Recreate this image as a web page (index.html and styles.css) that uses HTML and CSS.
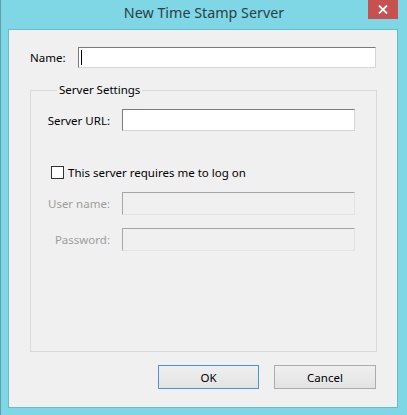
FILE: index.html
```html
<!DOCTYPE html>
<html>
<head>
<meta charset="utf-8">
<link rel="stylesheet" href="styles.css">
</head>
<body>
<div class="frame">
  <div class="titlebar">
    <div class="title">New Time Stamp Server</div>
    <div class="close"><svg width="10" height="9" viewBox="0 0 10 9"><path d="M1 0.5 L9 8.5 M9 0.5 L1 8.5" stroke="#fff" stroke-width="1.8"/></svg></div>
  </div>
  <div class="client">
    <div class="name-row">
      <label class="name-label">Name:</label>
      <div class="field active"><span class="caret"></span></div>
    </div>
    <fieldset class="group">
      <legend>Server Settings</legend>
      <div class="row url-row">
        <label class="lbl">Server URL:</label>
        <div class="field"></div>
      </div>
      <div class="check-row">
        <span class="checkbox"></span>
        <span class="check-text">This server requires me to log on</span>
      </div>
      <div class="row user-row">
        <label class="lbl disabled">User name:</label>
        <div class="field off"></div>
      </div>
      <div class="row pass-row">
        <label class="lbl disabled">Password:</label>
        <div class="field off"></div>
      </div>
    </fieldset>
    <div class="buttons">
      <div class="btn default">OK</div>
      <div class="btn">Cancel</div>
    </div>
  </div>
</div>
</body>
</html>
```

FILE: styles.css
```css
* { box-sizing: border-box; }
html, body { margin: 0; padding: 0; }
body {
  width: 407px;
  height: 415px;
  overflow: hidden;
  background: #7fd7e6;
  font-family: "Noto Sans", "Open Sans", sans-serif;
  font-size: 11.5px;
  color: #000;
}
.frame {
  width: 407px;
  height: 415px;
  display: flex;
  flex-direction: column;
  padding: 0 9px 7px 7px;
  border-left: 1px solid #5f9fb0;
}
.titlebar {
  height: 29px;
  display: flex;
  align-items: flex-start;
  justify-content: center;
  position: relative;
}
.title {
  font-size: 14.3px;
  line-height: 25px;
  color: #2b4049;
  margin-left: 2px;
}
.close {
  position: absolute;
  right: 0;
  top: 0;
  width: 30px;
  height: 19px;
  background: #c75050;
  display: flex;
  align-items: center;
  justify-content: center;
}
.client {
  flex: 1;
  background: #f0f0f0;
  border: 1px solid #64bccc;
  padding: 17px 21px 0 21px;
  display: flex;
  flex-direction: column;
}
.name-row {
  display: flex;
  align-items: center;
  height: 21px;
}
.name-label { width: 48px; }
.field {
  flex: 1;
  height: 100%;
  background: #fff;
  border: 1px solid;
  border-color: #7a7a7a #d6d6d6 #d6d6d6 #7a7a7a;
  position: relative;
}
.field.off {
  background: #f0f0f0;
  border-color: #a6a6a6 #e3e3e3 #e3e3e3 #a6a6a6;
}
.caret {
  position: absolute;
  left: 2px;
  top: 2px;
  width: 1px;
  height: 15px;
  background: #000;
}
.group {
  margin: 14px -1px 0 0;
  padding: 11px 21px 0 20px;
  border: 1px solid #d9d9d9;
  height: 270px;
  min-width: 0;
}
.group legend {
  margin-left: 6px;
  padding: 0 2px;
  line-height: 16px;
}
.row {
  display: grid;
  grid-template-columns: 59px 1fr;
  column-gap: 12px;
  align-items: center;
  height: 22px;
}
.lbl {
  display: flex;
  justify-content: flex-end;
  white-space: nowrap;
}
.lbl.disabled { color: #9d9d9d; }
.row .field { height: 22px; }
.user-row .field, .pass-row .field { height: 23px; }
.user-row, .pass-row { height: 23px; }
.check-row {
  display: flex;
  align-items: center;
  height: 17px;
  margin-top: 33px;
}
.checkbox {
  width: 13px;
  height: 13px;
  border: 1px solid #333;
  background: #fff;
  margin-right: 4px;
}
.user-row { margin-top: 11px; }
.pass-row { margin-top: 13px; }
.buttons {
  display: flex;
  justify-content: flex-end;
  gap: 15px;
  margin-top: 13px;
}
.btn {
  width: 101px;
  height: 24px;
  border: 1px solid #acacac;
  background: linear-gradient(#efefef, #e3e3e3);
  display: flex;
  align-items: center;
  justify-content: center;
}
.btn.default { border-color: #4a94dc; }
.btn + .btn { width: 102px; }
```
